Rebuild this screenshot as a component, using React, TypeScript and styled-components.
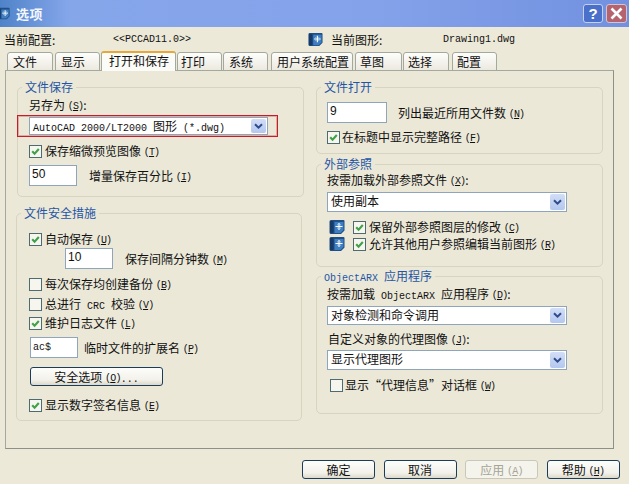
import React from "react";
import styled, { createGlobalStyle } from "styled-components";

const GlobalStyle = createGlobalStyle`
  html, body {
    margin: 0;
    width: 629px;
    height: 484px;
    overflow: hidden;
    background: #ece9d8;
  }
`;

const tabs = [
  { label: "文件", width: 46, gap: 2, pad: 5 },
  { label: "显示", width: 45, gap: 1, pad: 5 },
  { label: "打开和保存", width: 75, gap: 1, pad: 7, active: true },
  { label: "打印", width: 45, gap: 1, pad: 3 },
  { label: "系统", width: 45, gap: 3, pad: 5 },
  { label: "用户系统配置", width: 82, gap: 2, pad: 5 },
  { label: "草图", width: 47, gap: 1, pad: 4 },
  { label: "选择", width: 46, gap: 3, pad: 4 },
  { label: "配置", width: 45, gap: 0, pad: 4 },
];

const AppIcon = ({ size = 15 }: { size?: number }) => (
  <svg width={size} height={size} viewBox="0 0 16 16" style={{ flexShrink: 0 }}>
    <path d="M2 1h12.5a1 1 0 0 1 1 1v9.5l-3.5 3.5H2a1.5 1.5 0 0 1-1.5-1.5v-11A1.5 1.5 0 0 1 2 1z" fill="#1f4f86" />
    <rect x="1" y="2" width="3.5" height="12" rx="1" fill="#173a66" />
    <path d="M5.5 3h9v8l-3 3h-6z" fill="#3d7fc0" />
    <path d="M10 4v7M6.5 7.5h7" stroke="#fff" strokeWidth="1.2" />
    <path d="M8 5.5h.8v.8H8zM11.2 5.5h.8v.8h-.8zM8 8.7h.8v.8H8zM11.2 8.7h.8v.8h-.8z" fill="#e4f2fb" />
  </svg>
);

const Hot = ({ k }: { k: string }) => (
  <HotText>
    (<u>{k}</u>)
  </HotText>
);

const Check = ({ checked, $mr }: { checked?: boolean; $mr?: number }) => (
  <CheckBox $mr={$mr}>
    {checked && (
      <svg width="11" height="11" viewBox="0 0 11 11">
        <path d="M2.2 5.2l2.4 2.6 4.2-4.8" fill="none" stroke="#3fa14a" strokeWidth="2.1" />
      </svg>
    )}
  </CheckBox>
);

const Combo = ({ children, width, $h = 20 }: { children: React.ReactNode; width: number; $h?: number }) => (
  <ComboBox style={{ width }} $h={$h}>
    <ComboText>{children}</ComboText>
    <ComboArrow>
      <svg width="11" height="9" viewBox="0 0 11 9">
        <path d="M2 2.2l3.5 3.5L9 2.2" fill="none" stroke="#2c4c8c" strokeWidth="2" />
      </svg>
    </ComboArrow>
  </ComboBox>
);

export default function App() {
  return (
    <Dialog>
      <GlobalStyle />
      <TitleBar>
        <TitleIcon>
          <AppIcon size={13} />
        </TitleIcon>
        <TitleText>选项</TitleText>
        <HelpButton>?</HelpButton>
        <CloseButton>
          <svg width="15" height="15" viewBox="0 0 15 15">
            <path d="M2.5 2.5l10 10M12.5 2.5l-10 10" stroke="#fff" strokeWidth="2.6" />
          </svg>
        </CloseButton>
      </TitleBar>

      <InfoRow>
        <span>当前配置:</span>
        <Latin>&lt;&lt;PCCAD11.0&gt;&gt;</Latin>
        <AppIcon size={15} />
        <span>当前图形:</span>
        <Latin>Drawing1.dwg</Latin>
      </InfoRow>

      <TabStrip>
        {tabs.map((t) => (
          <Tab key={t.label} $width={t.width} $gap={t.gap} $pad={t.pad} $active={t.active}>
            {t.label}
          </Tab>
        ))}
      </TabStrip>

      <Panel>
        <Column>
          <Group $left={1} $width={287} $height={110} $mt={0}>
            <Legend>文件保存</Legend>
            <Row $top={9} $left={11}>
              <Label>另存为 <Hot k="S" />:</Label>
            </Row>
            <RedBox>
              <Combo width={239} $h={18}>
                <Latin>AutoCAD 2000/LT2000&nbsp;</Latin>图形<Latin>&nbsp;(*.dwg)</Latin>
              </Combo>
            </RedBox>
            <Row $top={6} $left={11}>
              <Check checked />
              <Label>保存缩微预览图像 <Hot k="T" /></Label>
            </Row>
            <Row $top={6} $left={11}>
              <Field $width={48} $h={21} $mr={12}>50</Field>
              <Label>增量保存百分比 <Hot k="I" /></Label>
            </Row>
          </Group>

          <Group $left={0} $width={286} $height={208} $mt={16}>
            <Legend>文件安全措施</Legend>
            <Row $top={17} $left={12}>
              <Check checked />
              <Label>自动保存 <Hot k="U" /></Label>
            </Row>
            <Row $top={1} $left={48}>
              <Field $width={48} $h={21} $mr={12}>10</Field>
              <Label>保存间隔分钟数 <Hot k="M" /></Label>
            </Row>
            <Row $top={7} $left={12}>
              <Check />
              <Label>每次保存均创建备份 <Hot k="B" /></Label>
            </Row>
            <Row $top={4} $left={12}>
              <Check />
              <Label>总进行<Latin>&nbsp;CRC&nbsp;</Latin>校验 <Hot k="V" /></Label>
            </Row>
            <Row $top={3} $left={12}>
              <Check checked />
              <Label>维护日志文件 <Hot k="L" /></Label>
            </Row>
            <Row $top={6} $left={13}>
              <Field $width={48} $h={21} $mr={6}>
                <Latin>ac$</Latin>
              </Field>
              <Label>临时文件的扩展名 <Hot k="P" /></Label>
            </Row>
            <Row $top={9} $left={13}>
              <PushButton $width={133} $height={19}>
                <Label>安全选项 <Hot k="O" /><Latin>...</Latin></Label>
              </PushButton>
            </Row>
            <Row $top={11} $left={12}>
              <Check checked />
              <Label>显示数字签名信息 <Hot k="E" /></Label>
            </Row>
          </Group>
        </Column>

        <Column>
          <Group $left={0} $width={287} $height={67} $mt={0}>
            <Legend>文件打开</Legend>
            <Row $top={14} $left={10}>
              <Field $width={60} $h={21} $mr={11}>9</Field>
              <Label>列出最近所用文件数 <Hot k="N" /></Label>
            </Row>
            <Row $top={6} $left={10}>
              <Check checked $mr={2} />
              <Label>在标题中显示完整路径 <Hot k="F" /></Label>
            </Row>
          </Group>

          <Group $left={0} $width={287} $height={103} $mt={10}>
            <Legend>外部参照</Legend>
            <Row $top={7} $left={10}>
              <Label>按需加载外部参照文件 <Hot k="X" />:</Label>
            </Row>
            <Row $top={4} $left={10}>
              <Combo width={240}>使用副本</Combo>
            </Row>
            <IconRow $top={7}>
              <AppIcon size={16} />
              <Check checked />
              <Label>保留外部参照图层的修改 <Hot k="C" /></Label>
            </IconRow>
            <IconRow $top={1}>
              <AppIcon size={16} />
              <Check checked />
              <Label>允许其他用户参照编辑当前图形 <Hot k="R" /></Label>
            </IconRow>
          </Group>

          <Group $left={0} $width={287} $height={138} $mt={9}>
            <Legend>
              <Latin>ObjectARX&nbsp;</Latin>应用程序
            </Legend>
            <Row $top={9} $left={10}>
              <Label>按需加载<Latin>&nbsp;ObjectARX&nbsp;</Latin>应用程序 <Hot k="D" />:</Label>
            </Row>
            <Row $top={4} $left={10}>
              <Combo width={240} $h={19}>对象检测和命令调用</Combo>
            </Row>
            <Row $top={6} $left={11}>
              <Label>自定义对象的代理图像 <Hot k="J" />:</Label>
            </Row>
            <Row $top={3} $left={10}>
              <Combo width={240}>显示代理图形</Combo>
            </Row>
            <Row $top={7} $left={13}>
              <Check $mr={2} />
              <Label>显示“代理信息”对话框 <Hot k="W" /></Label>
            </Row>
          </Group>
        </Column>
      </Panel>

      <Footer>
        <PushButton $width={73} $height={19}>确定</PushButton>
        <PushButton $width={73} $height={19}>取消</PushButton>
        <PushButton $width={73} $height={19} $disabled>
          <Label>应用 <Hot k="A" /></Label>
        </PushButton>
        <PushButton $width={73} $height={19}>
          <Label>帮助 <Hot k="H" /></Label>
        </PushButton>
      </Footer>
    </Dialog>
  );
}

const Dialog = styled.div`
  width: 629px;
  height: 484px;
  overflow: hidden;
  background: #ece9d8;
  color: #111;
  font-family: "Noto Sans CJK SC", "Liberation Sans", sans-serif;
  font-size: 12px;
  line-height: 16px;
  display: flex;
  flex-direction: column;
`;

const TitleBar = styled.div`
  height: 27px;
  flex-shrink: 0;
  display: flex;
  align-items: center;
  background: linear-gradient(90deg, #4f83c9 0, #86a6ea 70px, #84a2ea 60%, #7190df 100%);
`;

const TitleIcon = styled.div`
  margin-left: -3px;
  margin-right: 6px;
  display: flex;
`;

const TitleText = styled.div`
  flex: 1;
  color: #f4f7ff;
  font-size: 13px;
  font-weight: 700;
  letter-spacing: 0.5px;
`;

const HelpButton = styled.div`
  width: 20px;
  height: 19px;
  margin-right: 3px;
  border: 1px solid #c4d0f0;
  border-radius: 3px;
  box-sizing: border-box;
  background: #4a70c9;
  color: #fff;
  font: 700 15px/17px "Liberation Sans", sans-serif;
  text-align: center;
`;

const CloseButton = styled.div`
  width: 21px;
  height: 19px;
  margin-right: 2px;
  border: 1px solid #d2c4d4;
  border-radius: 3px;
  box-sizing: border-box;
  background: #b5646e;
  display: flex;
  align-items: center;
  justify-content: center;
`;

const InfoRow = styled.div`
  height: 25px;
  flex-shrink: 0;
  padding-left: 4px;
  display: grid;
  grid-template-columns: 109px 195px 23px 112px auto;
  align-items: center;
`;

const Latin = styled.span`
  font-family: "Liberation Mono", monospace;
  font-size: 10px;
  line-height: 1;
`;

const HotText = styled.span`
  font-family: "Liberation Mono", monospace;
  font-size: 10px;
  line-height: 1;
  letter-spacing: -0.8px;
  vertical-align: 1px;
`;

const Label = styled.span`
  white-space: pre;
`;

const TabStrip = styled.div`
  height: 19px;
  margin-bottom: -1px;
  flex-shrink: 0;
  padding-left: 7px;
  display: flex;
  align-items: flex-end;
  position: relative;
  z-index: 1;
`;

const Tab = styled.div<{ $width: number; $gap: number; $pad: number; $active?: boolean }>`
  width: ${(p) => p.$width}px;
  height: ${(p) => (p.$active ? 20 : 19)}px;
  margin-right: ${(p) => p.$gap}px;
  padding-left: ${(p) => p.$pad}px;
  box-sizing: border-box;
  border: 1px solid #a3a99f;
  border-bottom: ${(p) => (p.$active ? "none" : "1px solid #a3a99f")};
  border-top: ${(p) => (p.$active ? "2px solid #e8a838" : "1px solid #a3a99f")};
  border-radius: 3px 3px 0 0;
  background: ${(p) => (p.$active ? "#fbfbf7" : "linear-gradient(#fdfdfb, #ece9df)")};
  white-space: nowrap;
  line-height: ${(p) => (p.$active ? 15 : 18)}px;
`;

const Panel = styled.div`
  width: 609px;
  height: 379px;
  margin-left: 5px;
  flex-shrink: 0;
  box-sizing: border-box;
  border: 1px solid #a3a99f;
  border-right-color: #8c9086;
  border-bottom-color: #8c9086;
  background: #ebe8d8;
  padding: 16px 0 0 10px;
  display: grid;
  grid-template-columns: 300px 287px;
  align-content: start;
`;

const Column = styled.div`
  display: flex;
  flex-direction: column;
`;

const Group = styled.div<{ $left: number; $width: number; $height: number; $mt: number }>`
  position: relative;
  margin-left: ${(p) => p.$left}px;
  margin-top: ${(p) => p.$mt}px;
  width: ${(p) => p.$width}px;
  height: ${(p) => p.$height}px;
  box-sizing: border-box;
  border: 1px solid #d8d4c2;
  border-radius: 5px;
  display: flex;
  flex-direction: column;
  align-items: flex-start;
`;

const Legend = styled.div`
  position: absolute;
  top: -9px;
  left: 4px;
  padding: 0 3px;
  background: #ebe8d8;
  color: #2455a4;
  white-space: nowrap;
`;

const Row = styled.div<{ $top: number; $left: number }>`
  margin-top: ${(p) => p.$top}px;
  margin-left: ${(p) => p.$left}px;
  display: flex;
  align-items: center;
`;

const IconRow = styled(Row).attrs({ $left: 12 })`
  & > svg {
    margin-right: 8px;
  }
`;

const RedBox = styled.div`
  margin-top: 2px;
  margin-left: -1px;
  width: 261px;
  height: 22px;
  box-sizing: border-box;
  border: 1px solid #c41e2a;
  box-shadow: inset 0 0 0 1px rgba(200, 60, 70, 0.35);
  padding-left: 11px;
  display: flex;
  align-items: center;
`;

const ComboBox = styled.div<{ $h: number }>`
  height: ${(p) => p.$h}px;
  box-sizing: border-box;
  border: 1px solid #8fa5bb;
  background: #fff;
  display: flex;
  align-items: stretch;
`;

const ComboText = styled.div`
  flex: 1;
  padding-left: 3px;
  line-height: 16px;
  white-space: pre;
`;

const ComboArrow = styled.div`
  width: 15px;
  margin: 1px;
  border-radius: 2px;
  background: linear-gradient(#d3def7, #b4c7ef);
  display: flex;
  align-items: center;
  justify-content: center;
`;

const CheckBox = styled.span<{ $mr?: number }>`
  width: 13px;
  height: 13px;
  flex-shrink: 0;
  margin-right: ${(p) => p.$mr ?? 3}px;
  box-sizing: border-box;
  border: 1px solid #4f6b72;
  background: #f6f5ee;
  display: flex;
  align-items: center;
  justify-content: center;
`;

const Field = styled.div<{ $width: number; $h: number; $mr: number }>`
  width: ${(p) => p.$width}px;
  height: ${(p) => p.$h}px;
  margin-right: ${(p) => p.$mr}px;
  box-sizing: border-box;
  border: 1px solid #8fa5bb;
  background: #fff;
  padding-left: 2px;
  line-height: 17px;
  font-family: "Liberation Sans", sans-serif;
`;

const PushButton = styled.div<{ $width: number; $height: number; $disabled?: boolean }>`
  width: ${(p) => p.$width}px;
  height: ${(p) => p.$height}px;
  box-sizing: border-box;
  border: 1px solid ${(p) => (p.$disabled ? "#c9c7ba" : "#1c3c5c")};
  border-radius: 3px;
  background: ${(p) => (p.$disabled ? "#f4f3ec" : "linear-gradient(#fdfdfb, #f2f1ea 70%, #dcd8ca)")};
  color: ${(p) => (p.$disabled ? "#a5a596" : "#111")};
  display: flex;
  align-items: center;
  justify-content: center;
`;

const Footer = styled.div`
  margin-top: 11px;
  padding-left: 302px;
  display: grid;
  grid-template-columns: repeat(4, 73px);
  column-gap: 8.5px;
`;
